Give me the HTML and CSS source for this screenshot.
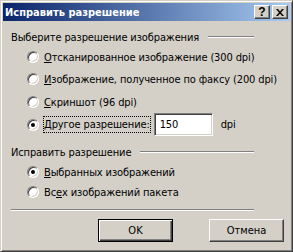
FILE: index.html
```html
<!DOCTYPE html>
<html lang="ru">
<head>
  <meta charset="UTF-8" />
  <title>Исправить разрешение</title>
  <link rel="stylesheet" href="styles.css">
</head>
<body>
  <div class="window" role="dialog" aria-label="Исправить разрешение">
    <div class="titlebar">
      <span class="title">Исправить разрешение</span>
      <div class="caption-buttons">
        <span class="caption-btn help">?</span>
        <span class="caption-btn close">
          <svg width="8" height="7" viewBox="0 0 8 7" aria-hidden="true">
            <path d="M0 0h2l2 2.5L6 0h2L5 3.5 8 7H6L4 4.5 2 7H0l3-3.5z" fill="#000"/>
          </svg>
        </span>
      </div>
    </div>

    <div class="client">
      <div class="group-head head-first">
        <span>Выберите разрешение изображения</span>
        <span class="etched"></span>
      </div>
      <div class="option opt-1"><span class="radio"></span><span><u>О</u>тсканированное изображение (300 dpi)</span></div>
      <div class="option opt-2"><span class="radio"></span><span><u>И</u>зображение, полученное по факсу (200 dpi)</span></div>
      <div class="option opt-3"><span class="radio"></span><span><u>С</u>криншот (96 dpi)</span></div>
      <div class="option opt-4">
        <span class="radio checked"></span>
        <span class="focused"><u>Д</u>ругое разрешение:</span>
        <span class="edit">150</span>
        <span class="unit">dpi</span>
      </div>

      <div class="group-head head-second">
        <span>Исправить разрешение</span>
        <span class="etched"></span>
      </div>
      <div class="option opt-5"><span class="radio checked"></span><span><u>В</u>ыбранных изображений</span></div>
      <div class="option opt-6"><span class="radio"></span><span>Вс<u>е</u>х изображений пакета</span></div>

      <div class="separator"></div>

      <div class="buttons">
        <button type="button" class="btn default">OK</button>
        <button type="button" class="btn">Отмена</button>
      </div>
    </div>
  </div>
</body>
</html>
```

FILE: styles.css
```css
:root {
  --face: #d4d0c8;
  --light: #ffffff;
  --shadow: #808080;
  --dark: #404040;
  --ui-font: "DejaVu Sans Condensed", "Liberation Sans", sans-serif;
}

* {
  box-sizing: border-box;
}

body {
  margin: 0;
  background: var(--face);
  font-family: var(--ui-font);
  font-size: 11px;
  color: #000;
}

.window {
  width: 293px;
  height: 252px;
  padding: 2px;
  background: var(--face);
  border: 1px solid;
  border-color: var(--face) var(--dark) var(--dark) var(--face);
  box-shadow: inset 1px 1px 0 var(--light), inset -1px -1px 0 var(--shadow);
}

/* title bar */
.titlebar {
  height: 18px;
  display: flex;
  align-items: center;
  justify-content: space-between;
  padding: 0 2px 0 2px;
  background: linear-gradient(to right, #0a246a, #a6caf0);
}

.title {
  color: #fff;
  font-weight: 700;
  font-size: 11px;
  white-space: nowrap;
}

.caption-buttons {
  display: flex;
  gap: 2px;
}

.caption-btn {
  width: 16px;
  height: 14px;
  display: flex;
  align-items: center;
  justify-content: center;
  background: var(--face);
  border: 1px solid;
  border-color: var(--light) var(--dark) var(--dark) var(--light);
  box-shadow: inset -1px -1px 0 var(--shadow);
}

.help {
  font-family: "Liberation Sans", sans-serif;
  font-weight: 700;
  font-size: 12px;
  line-height: 1;
}

/* client area */
.client {
  padding: 0 4px 0 8px;
  letter-spacing: -0.12px;
}

.group-head {
  width: 243px;
  height: 20px;
  display: flex;
  align-items: center;
  gap: 9px;
  white-space: nowrap;
}

.head-first {
  margin-top: 6px;
}

.head-second {
  margin-top: 6px;
}

.etched {
  flex: 1;
  height: 2px;
  border-top: 1px solid var(--shadow);
  border-bottom: 1px solid var(--light);
}

.option {
  height: 20px;
  display: flex;
  align-items: center;
  margin-left: 16px;
  white-space: nowrap;
}

.opt-2 { margin-top: 2px; }
.opt-3 { margin-top: 3px; }
.opt-4 { margin-top: 1px; height: 23px; }

.radio {
  position: relative;
  flex: none;
  width: 12px;
  height: 12px;
  margin-right: 5px;
  border-radius: 50%;
  background: #fff;
  border: 1px solid;
  border-color: var(--shadow) var(--light) var(--light) var(--shadow);
  box-shadow: inset 1px 1px 0 var(--dark), inset -1px -1px 0 var(--face);
}

.radio.checked::after {
  content: "";
  position: absolute;
  left: 3px;
  top: 3px;
  width: 4px;
  height: 4px;
  border-radius: 50%;
  background: #000;
}

.focused {
  padding: 1px 0 1px 0;
  outline: 1px dotted #000;
  outline-offset: 0;
}

.edit {
  width: 59px;
  height: 23px;
  margin-left: 4px;
  padding: 0 0 0 5px;
  display: flex;
  align-items: center;
  background: #fff;
  border: 1px solid;
  border-color: var(--shadow) var(--light) var(--light) var(--shadow);
  box-shadow: inset 1px 1px 0 var(--dark), inset -1px -1px 0 var(--face);
}

.unit {
  margin-left: 8px;
}

.separator {
  width: 243px;
  height: 2px;
  margin-top: 7px;
  border-top: 1px solid var(--shadow);
  border-bottom: 1px solid var(--light);
}

.buttons {
  display: flex;
  justify-content: flex-end;
  gap: 36px;
  margin-top: 8px;
  padding-right: 2px;
}

.btn {
  width: 75px;
  height: 23px;
  padding: 0;
  font-family: var(--ui-font);
  font-size: 11px;
  color: #000;
  background: var(--face);
  border: 1px solid;
  border-color: var(--light) var(--dark) var(--dark) var(--light);
  box-shadow: inset -1px -1px 0 var(--shadow);
}

.btn.default {
  border: 1px solid #000;
  box-shadow: inset 1px 1px 0 var(--light), inset -1px -1px 0 var(--dark), inset -2px -2px 0 var(--shadow);
}
```
